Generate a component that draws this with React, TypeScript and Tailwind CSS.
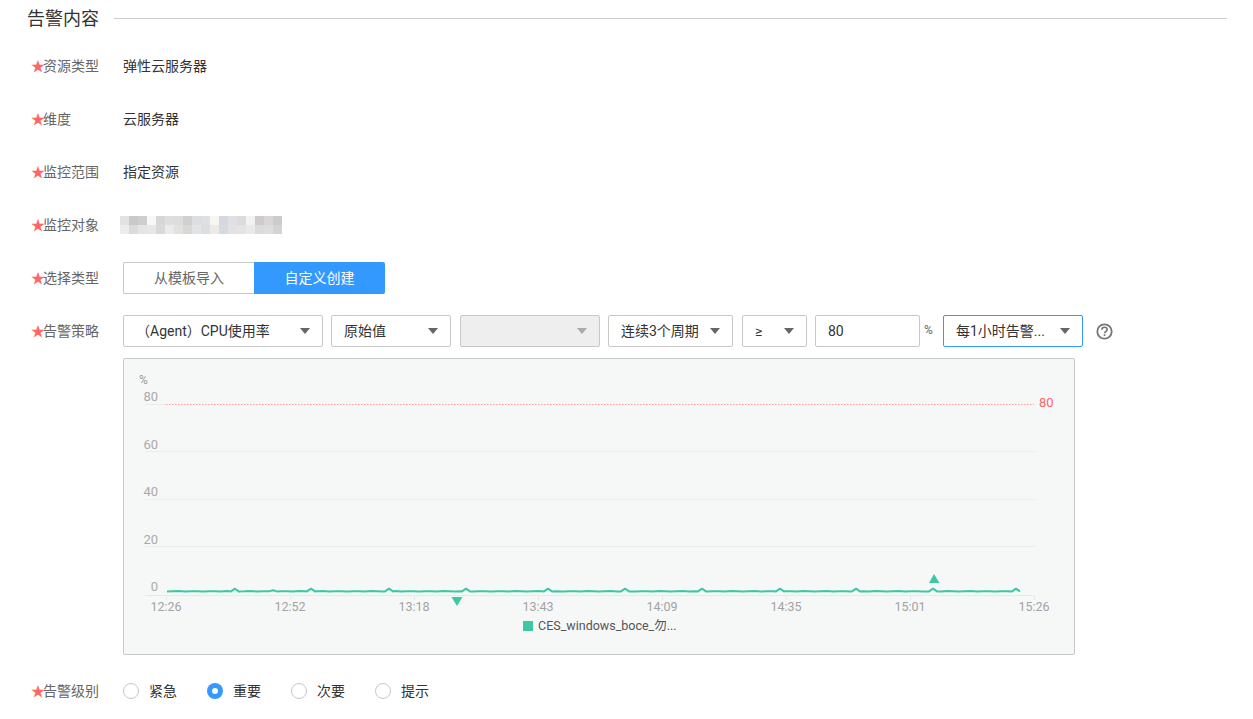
import React from "react";

const FONT = "font-['Roboto','Noto_Sans_CJK_SC',sans-serif]";

const mosaic = [
  ["#e3e2e2","#cac8c8","#cfcecd","#f7f8fa","#d8d7d8","#dfdedd","#dedddb","#d0d0d0","#dcdee0","#dfe0e2","#f8f6f2","#d3d9df","#e0e0e2","#dcdadb","#f0f2f4","#cfcbcc","#d8d6d6","#cdcccc"],
  ["#ececeb","#dcdbdb","#e6e5e3","#e5e7eb","#d9d9da","#ecebe9","#e2e1de","#d8d8d7","#e3e4e4","#dcdde0","#eceae6","#d5dae0","#e2e2e3","#e4e4e5","#e8eaea","#dcdadb","#dfdede","#d4d4d5"],
];

function Label({ text }: { text: string }) {
  return (
    <div className="w-[123px] flex items-center shrink-0 pl-[31px] text-[14px] text-[#666666]">
      <span className="w-3 text-[#f66] text-[14px] leading-none">★</span>
      <span>{text}</span>
    </div>
  );
}

function Row({ label, children, className = "" }: { label: string; children: React.ReactNode; className?: string }) {
  return (
    <div className={`flex h-8 items-center ${className}`}>
      <Label text={label} />
      {children}
    </div>
  );
}

function Caret({ light }: { light?: boolean }) {
  return <span className={`w-0 h-0 border-x-[5px] border-x-transparent border-t-[6px] ${light ? "border-t-[#aaaaaa]" : "border-t-[#666666]"}`} />;
}

function Select({ text, className, active, disabled }: { text?: string; className: string; active?: boolean; disabled?: boolean }) {
  return (
    <div
      className={`h-8 shrink-0 flex items-center justify-between pl-3 pr-3 rounded-[2px] border text-[14px] text-[#333333] ${
        active ? "border-[#3399ff]" : "border-[#c8c8c8]"
      } ${disabled ? "bg-[#eeeeee]" : "bg-white"} ${className}`}
    >
      <span className="whitespace-nowrap">{text}</span>
      <Caret light={disabled} />
    </div>
  );
}

function Radio({ text, checked }: { text: string; checked?: boolean }) {
  return (
    <div className="w-[84px] flex items-center gap-[10px] text-[14px] text-[#333333]">
      {checked ? (
        <span className="w-4 h-4 rounded-full bg-[#3399ff] flex items-center justify-center">
          <span className="w-[6px] h-[6px] rounded-full bg-white" />
        </span>
      ) : (
        <span className="w-4 h-4 rounded-full border border-[#c8c8c8] bg-white" />
      )}
      <span>{text}</span>
    </div>
  );
}

function HelpIcon() {
  return (
    <svg width="17" height="17" viewBox="0 0 17 17" className="ml-[13px] shrink-0">
      <circle cx="8.5" cy="8.5" r="7.2" fill="none" stroke="#757575" strokeWidth="1.8" />
      <path d="M5.9 6.7c0-1.5 1.1-2.4 2.6-2.4s2.6.9 2.6 2.2c0 1-.6 1.5-1.3 2-.7.5-1.2.9-1.2 1.7" fill="none" stroke="#757575" strokeWidth="1.6" />
      <rect x="7.7" y="11.2" width="1.7" height="1.7" fill="#757575" />
    </svg>
  );
}

const spikes = [235, 273, 311, 389, 466, 548, 625, 702, 780, 856, 933, 1016];

function linePath() {
  const pts: string[] = [];
  const small = [273];
  for (let x = 167; x <= 1020; x += 6) {
    const wobble = x % 18 === 5 ? 0.35 : x % 24 === 11 ? -0.3 : 0;
    pts.push(`${x},${(591.3 + wobble).toFixed(1)}`);
  }
  spikes.forEach((s) => {
    const h = small.includes(s) ? 1 : 2.6;
    pts.push(`${s - 4},591.4`, `${s},${591.3 - h}`, `${s + 4},591.4`);
  });
  const sorted = pts
    .map((p) => p.split(",").map(Number))
    .filter((p) => !spikes.some((s) => Math.abs(p[0] - s) < 4 && p[1] > 590.5 && Math.abs(p[0] - s) !== 4))
    .sort((a, b) => a[0] - b[0]);
  return sorted.map((p) => p.join(",")).join(" ");
}

function Chart() {
  const grid = [451, 499, 546];
  const ticks: [number, string][] = [
    [166, "12:26"],
    [290, "12:52"],
    [414, "13:18"],
    [538, "13:43"],
    [662, "14:09"],
    [786, "14:35"],
    [910, "15:01"],
    [1034, "15:26"],
  ];
  const ys: [number, string, number][] = [
    [401, "80", 158],
    [449, "60", 158],
    [496, "40", 158],
    [544, "20", 158],
    [591, "0", 158],
  ];
  return (
    <div className="w-[952px] h-[297px] ml-[123px] mt-[11px] border border-[#c8c8c8] rounded-[2px] bg-[#f6f8f8] relative overflow-hidden">
      <svg width="950" height="295" viewBox="124 359 950 295" className="block font-['Roboto','Noto_Sans_CJK_SC',sans-serif]">
        {grid.map((y) => (
          <line key={y} x1="145" x2="1035" y1={y + 0.5} y2={y + 0.5} stroke="#e9eded" />
        ))}
        <line x1="145" x2="166" y1="404.5" y2="404.5" stroke="#e9eded" />
        <line x1="145" x2="1035" y1="595.5" y2="595.5" stroke="#e6eaea" />
        {ticks.map(([x]) => (
          <line key={x} x1={x + 0.5} x2={x + 0.5} y1="595" y2="600" stroke="#e6eaea" />
        ))}
        <line x1="166" x2="1034" y1="404.5" y2="404.5" stroke="#ff9a9a" strokeDasharray="1.5 1.5" />
        <text x="139" y="384" fontSize="12" fill="#999999">%</text>
        {ys.map(([y, t, x]) => (
          <text key={t} x={x} y={y} fontSize="13" fill="#aaaaaa" textAnchor="end">{t}</text>
        ))}
        <text x="1039" y="407" fontSize="13" fill="#ff6666">80</text>
        {ticks.map(([x, t]) => (
          <text key={t} x={x} y="611" fontSize="12.5" fill="#a3a3a3" textAnchor="middle">{t}</text>
        ))}
        <polyline points={linePath()} fill="none" stroke="#3cc8a3" strokeWidth="2" strokeLinejoin="round" />
        <polygon points="451.5,597 462.5,597 457,606" fill="#3cc8a3" />
        <polygon points="929,583 939.5,583 934,574" fill="#3cc8a3" />
        <rect x="523" y="621" width="10" height="10" fill="#3cc8a3" />
        <text x="538" y="630" fontSize="12.5" fill="#555555">CES_windows_boce_勿...</text>
      </svg>
    </div>
  );
}

export default function App() {
  return (
    <div className={`w-[1253px] h-[719px] overflow-hidden bg-white ${FONT}`}>
      <div className="flex items-center h-7 mt-1 ml-[27px] mr-[26px] mb-[18px]">
        <span className="text-[18px] text-[#333333] whitespace-nowrap">告警内容</span>
        <div className="flex-1 h-px bg-[#cccccc] ml-[15px]" />
      </div>

      <Row label="资源类型" className="mb-[21px]">
        <span className="text-[14px] text-[#333333]">弹性云服务器</span>
      </Row>
      <Row label="维度" className="mb-[21px]">
        <span className="text-[14px] text-[#333333]">云服务器</span>
      </Row>
      <Row label="监控范围" className="mb-[21px]">
        <span className="text-[14px] text-[#333333]">指定资源</span>
      </Row>
      <Row label="监控对象" className="mb-[21px]">
        <svg width="162" height="18" viewBox="0 0 162 18" className="-ml-[3px]" shapeRendering="crispEdges">
          {mosaic.map((r, j) =>
            r.map((c, i) => <rect key={`${i}-${j}`} x={i * 9} y={j * 9} width="9" height="9" fill={c} />)
          )}
        </svg>
      </Row>
      <Row label="选择类型" className="mb-[21px]">
        <div className="flex h-8 text-[14px]">
          <div className="w-[131px] flex items-center justify-center border border-r-0 border-[#c8c8c8] rounded-l-[2px] text-[#666666]">从模板导入</div>
          <div className="w-[131px] flex items-center justify-center bg-[#3399ff] rounded-r-[2px] text-white">自定义创建</div>
        </div>
      </Row>
      <Row label="告警策略">
        <Select text="（Agent）CPU使用率" className="w-[200px]" />
        <Select text="原始值" className="w-[120px] ml-2" />
        <Select className="w-[140px] ml-[9px]" disabled />
        <Select text="连续3个周期" className="w-[125px] ml-2" />
        <Select text="≥" className="w-[65px] ml-[9px]" />
        <div className="w-[105px] h-8 ml-2 shrink-0 flex items-center pl-3 border border-[#c8c8c8] rounded-[2px] text-[14px] text-[#333333]">80</div>
        <span className="w-[23px] pl-1 text-[12px] text-[#666666] shrink-0 -mt-[3px]">%</span>
        <Select text="每1小时告警..." className="w-[140px]" active />
        <HelpIcon />
      </Row>
      <Chart />
      <div className="flex items-center h-8 mt-[20px]">
        <Label text="告警级别" />
        <Radio text="紧急" />
        <Radio text="重要" checked />
        <Radio text="次要" />
        <Radio text="提示" />
      </div>
    </div>
  );
}
